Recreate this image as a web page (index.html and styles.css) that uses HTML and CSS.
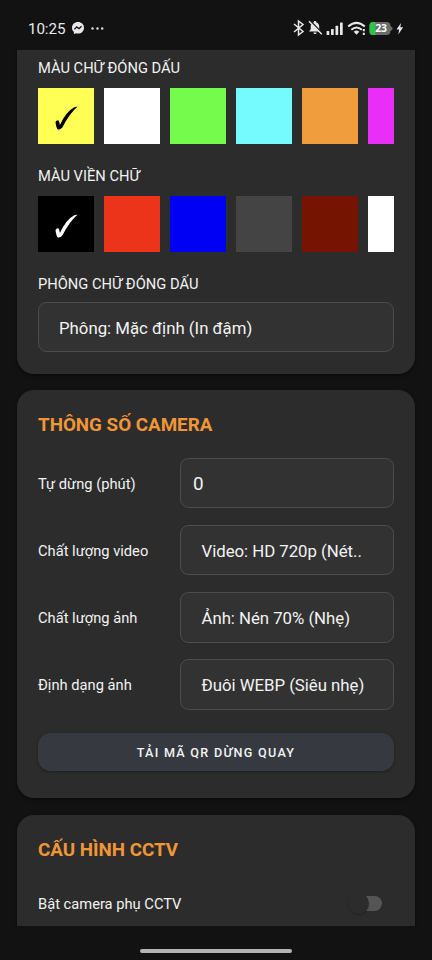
FILE: index.html
```html
<!DOCTYPE html>
<html lang="vi">
<head>
<meta charset="utf-8">
<title>Cài đặt camera</title>
<link rel="stylesheet" href="styles.css">
</head>
<body>
<header class="status">
  <span class="clock">10:25</span>
  <svg class="messenger" width="12" height="12" viewBox="0 0 12 12"><path fill="#e8e8e8" d="M6 0C2.6 0 0 2.4 0 5.7c0 1.8.7 3.2 1.9 4.2v1.6c0 .4.3.5.6.4l1.4-.6c.7.2 1.4.3 2.1.3 3.4 0 6-2.5 6-5.9S9.400 0 6 0z"/><path d="M2.400 7.400 4.700 4.900 7 6.600 9.600 4.300" fill="none" stroke="#161616" stroke-width="1.300"/></svg>
  <svg class="more" width="13" height="3" viewBox="0 0 13 3" fill="#e0e0e0"><circle cx="1.500" cy="1.500" r="1.200"/><circle cx="6.500" cy="1.500" r="1.200"/><circle cx="11.200" cy="1.500" r="1.200"/></svg>
  <svg class="indicators" width="112" height="18" viewBox="0 0 112 18">
    <path d="M1 5 10 12.500 5.500 16V2L10 5.500 1 13" fill="none" stroke="#e8e8e8" stroke-width="1.500"/>
    <path fill="#e8e8e8" d="M22 2c.8 0 1.200.5 1.200 1.200 2 .6 3 2.300 3 4.500v2.600l1.600 2.200H16l1.700-2.200V7.700c0-2.200 1.100-3.900 3.100-4.500C20.800 2.500 21.200 2 22 2zM20.400 13.500h3.200a1.600 1.600 0 0 1-3.200 0z"/>
    <path d="M17.200 1.800 30.200 15.200" stroke="#141414" stroke-width="1.600"/>
    <path d="M16 2.200 28.800 15.300" stroke="#e8e8e8" stroke-width="1.500"/>
    <g fill="#e8e8e8"><rect x="33.600" y="12" width="2.700" height="4" rx=".6"/><rect x="38" y="10" width="2.700" height="6" rx=".6"/><rect x="42.500" y="6.800" width="2.700" height="9.200" rx=".6"/><rect x="47" y="3.500" width="2.700" height="12.500" rx=".6"/></g>
    <g fill="none" stroke="#e8e8e8" stroke-width="2"><path d="M55.200 7.500Q63.500 .3 71.800 7.500"/><path d="M58.300 10.800Q63.500 6.200 68.800 10.800"/></g>
    <path d="M60.700 12.700Q63.500 10.500 66.300 12.700L63.500 15.800z" fill="#e8e8e8"/><path d="M70.800 10v2.200M70.800 13.700v2.200" stroke="#e8e8e8" stroke-width="2"/>
    <path d="M80 3H93.500a4 4 0 0 1 4 4l2 1.500v2L97.500 12a4 4 0 0 1-4 4H80A3.500 3.500 0 0 1 76.500 12.500v-6A3.500 3.500 0 0 1 80 3z" fill="#6b6b6b"/><path d="M80 3H82.500V16H80A3.500 3.500 0 0 1 76.500 12.500v-6A3.500 3.500 0 0 1 80 3z" fill="#2cc548"/>
    <text class="battery" x="82.200" y="13.100">23</text>
    <path fill="#e8e8e8" d="M108 4 103.500 10.500h2.700L105.300 15.500l4.800-7.300h-2.800z"/>
  </svg>
</header>

<main class="viewport">
  <section class="card card-stamp">
    <p class="label">MÀU CHỮ ĐÓNG DẤU</p>
    <div class="swatches">
      <i class="swatch yellow"><svg class="check" viewBox="0 0 24 26"><path d="M1.500 17Q2.500 15 4.200 15.300Q5 15.600 5.900 20Q12 6.500 20.300 2.200Q22 1.500 23.400 1.800Q16 8 8.300 22.500Q6.500 25 3.900 24.500Q2.300 23.500 1.500 17z"/></svg></i>
      <i class="swatch white"></i><i class="swatch green"></i><i class="swatch cyan"></i><i class="swatch orange"></i><i class="swatch magenta"></i>
    </div>
    <p class="label">MÀU VIỀN CHỮ</p>
    <div class="swatches">
      <i class="swatch black"><svg class="check" viewBox="0 0 24 26"><path d="M1.500 17Q2.500 15 4.200 15.300Q5 15.600 5.900 20Q12 6.500 20.300 2.200Q22 1.500 23.400 1.800Q16 8 8.300 22.500Q6.500 25 3.900 24.500Q2.300 23.500 1.500 17z"/></svg></i>
      <i class="swatch red"></i><i class="swatch blue"></i><i class="swatch gray"></i><i class="swatch maroon"></i><i class="swatch white"></i>
    </div>
    <p class="label">PHÔNG CHỮ ĐÓNG DẤU</p>
    <div class="field select">Phông: Mặc định (In đậm)</div>
  </section>

  <section class="card card-camera">
    <h2>THÔNG SỐ CAMERA</h2>
    <div class="rows">
      <div class="row"><span>Tự dừng (phút)</span><div class="field number">0</div></div>
      <div class="row"><span>Chất lượng video</span><div class="field select">Video: HD 720p (Nét..</div></div>
      <div class="row"><span>Chất lượng ảnh</span><div class="field select">Ảnh: Nén 70% (Nhẹ)</div></div>
      <div class="row"><span>Định dạng ảnh</span><div class="field select">Đuôi WEBP (Siêu nhẹ)</div></div>
    </div>
    <div class="button">TẢI MÃ QR DỪNG QUAY</div>
  </section>

  <section class="card card-cctv">
    <h2>CẤU HÌNH CCTV</h2>
    <div class="toggle-row"><span>Bật camera phụ CCTV</span><span class="switch"></span></div>
  </section>
</main>
<footer class="nav"><span class="handle"></span></footer>
</body>
</html>
```
FILE: styles.css
```css
* { box-sizing: border-box; }
body {
  margin: 0;
  width: 432px;
  height: 960px;
  overflow: hidden;
  display: flex;
  flex-direction: column;
  background: #121212;
  color: #f2f2f2;
  font-family: Roboto, "Noto Sans", sans-serif;
  font-size: 14.7px;
}
p, h2 { margin: 0; font-weight: 400; }

.status {
  height: 50px;
  flex: none;
  display: flex;
  align-items: center;
  padding: 6px 28px 0;
  color: #e8e8e8;
}
.clock { font-size: 15.2px; font-weight: 450; letter-spacing: -.1px; width: 44px; padding-top: 1px; }
.messenger { margin-right: 7px; }
.indicators { margin-left: auto; margin-right: -1px; flex: none; }
.battery { font: 700 10.500px "Open Sans", sans-serif; fill: #fff; letter-spacing: -.3px; }

.viewport {
  height: 876px;
  flex: none;
  overflow: hidden;
  padding: 0 17px;
  display: flex;
  flex-direction: column;
  gap: 16.800px;
}
.card {
  flex: none;
  background: #2c2c2c;
  border-radius: 17px;
  padding: 0 21px;
  box-shadow: 0 2px 4px rgba(0, 0, 0, .4);
}
.card-stamp { height: 323.500px; border-radius: 0 0 17px 17px; padding-top: 8px; }
.card-camera { height: 407.700px; padding-top: 22px; }
.card-cctv { height: 130px; padding-top: 22px; }

.label { height: 20px; line-height: 20px; margin-bottom: 10px; }
.swatches { display: flex; gap: 10px; overflow: hidden; margin-bottom: 22px; }
.swatch { width: 56px; height: 56px; flex: none; display: flex; align-items: center; justify-content: center; padding-top: 3px; }
.check { width: 24px; height: 26px; fill: #000; }
.yellow { background: #ffff55; }
.white { background: #fff; }
.green { background: #75fb4c; }
.cyan { background: #75fbfd; }
.orange { background: #f09e3d; }
.magenta { background: #e92ff7; }
.black { background: #000; }
.black .check { fill: #fff; }
.red { background: #eb3419; }
.blue { background: #0000f5; }
.gray { background: #444; }
.maroon { background: #751400; }

.field {
  height: 50.400px;
  border: 1.200px solid #4d4d4d;
  border-radius: 8.400px;
  background: #323232;
  display: flex;
  align-items: center;
  font-size: 16.800px;
  white-space: nowrap;
}
.card-stamp .label:last-of-type { margin-bottom: 8px; }
.card-stamp .select { padding-top: 1px; }
.select { padding-left: 20px; }
.row .select { padding-left: 20.500px; padding-top: 1px; letter-spacing: -.03px; }
.row > span { padding-top: 1.400px; }
.number { padding-left: 12px; font-size: 18.900px; }

h2 { height: 26px; line-height: 26px; font-size: 18.800px; font-weight: 700; color: #f09637; }
.card-camera h2 { line-height: 27.400px; }
.rows { display: grid; gap: 16.800px; margin-top: 19.600px; }
.row { display: grid; grid-template-columns: 142px 1fr; align-items: center; }
.button {
  height: 38px;
  margin-top: 23.400px;
  border-radius: 12.600px;
  background: #363a40;
  box-shadow: 0 1px 3px rgba(0, 0, 0, .35);
  display: flex;
  align-items: center;
  justify-content: center;
  font-size: 12.600px;
  font-weight: 500;
  letter-spacing: 1.280px;
}
.toggle-row { display: flex; align-items: center; justify-content: space-between; margin-top: 31px; padding-right: 12px; height: 20px; }
.switch { position: relative; width: 30px; height: 15px; border-radius: 8px; background: linear-gradient(90deg, transparent 40%, #555 40%); }
.switch::before {
  content: "";
  position: absolute;
  left: -4px;
  top: -3px;
  width: 21px;
  height: 21px;
  border-radius: 50%;
  background: #2c2c2c;
  box-shadow: 0 1px 2px rgba(0, 0, 0, .2);
}
.nav { flex: 1; display: flex; justify-content: center; padding-top: 23px; }
.handle { width: 152px; height: 4px; border-radius: 2px; background: #b4b4b4; }
```
